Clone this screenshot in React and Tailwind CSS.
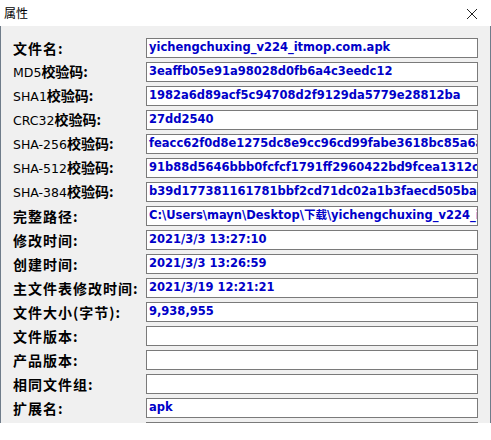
const rows = [
  ['文件名:', 'yichengchuxing_v224_itmop.com.apk'],
  ['MD5校验码:', '3eaffb05e91a98028d0fb6a4c3eedc12'],
  ['SHA1校验码:', '1982a6d89acf5c94708d2f9129da5779e28812ba'],
  ['CRC32校验码:', '27dd2540'],
  ['SHA-256校验码:', 'feacc62f0d8e1275dc8e9cc96cd99fabe3618bc85a6a91c0e2d7'],
  ['SHA-512校验码:', '91b88d5646bbb0fcfcf1791ff2960422bd9fcea1312cd4a8e0b2'],
  ['SHA-384校验码:', 'b39d177381161781bbf2cd71dc02a1b3faecd505ba7c2e19'],
  ['完整路径:', 'C:\\Users\\mayn\\Desktop\\下载\\yichengchuxing_v224_itmop.com.apk'],
  ['修改时间:', '2021/3/3 13:27:10'],
  ['创建时间:', '2021/3/3 13:26:59'],
  ['主文件表修改时间:', '2021/3/19 12:21:21'],
  ['文件大小(字节):', '9,938,955'],
  ['文件版本:', ''],
  ['产品版本:', ''],
  ['相同文件组:', ''],
  ['扩展名:', 'apk'],
  ['', ''],
];

// CJK runs are drawn bold, latin runs plain
function Label({ text }) {
  const parts = text.match(/[\u4e00-\u9fff()（）:]+|[^\u4e00-\u9fff()（）:]+/g) || [];
  const mixed = /[A-Za-z0-9]/.test(text);
  return (
    <span className="whitespace-nowrap text-black">
      {parts.map((p, i) =>
        /[\u4e00-\u9fff]/.test(p) || /^[():]+$/.test(p) ? (
          <span
            key={i}
            className={`text-[14px] font-bold ${mixed ? 'tracking-[0px]' : 'tracking-[1px]'}`}
            style={{ fontFamily: '"Noto Sans CJK SC", sans-serif' }}
          >
            {p}
          </span>
        ) : (
          <span key={i} className="text-[12.5px]" style={{ fontFamily: '"DejaVu Sans", Verdana, sans-serif' }}>
            {p}
          </span>
        )
      )}
    </span>
  );
}

export default function App() {
  return (
    <div className="w-[491px] h-[440px] bg-white">
      <div className="flex h-[26px] items-center justify-between bg-white pl-[4px] pr-[13px]">
        <span className="text-[12px] text-black" style={{ fontFamily: '"Noto Sans CJK SC", sans-serif' }}>属性</span>
        <svg width="12" height="12" viewBox="0 0 12 12" className="mt-[1px]">
          <path d="M1 1 L11 11 M11 1 L1 11" stroke="#222" strokeWidth="1" fill="none" />
        </svg>
      </div>
      <div className="h-[397px] overflow-hidden border-x border-[#6f7c8a] bg-[#f0f0f0] pl-[12px] pr-[12px] pt-[12px]">
        <div className="flex flex-col gap-[4px]">
          {rows.map(([label, value], i) => (
            <div key={i} className="flex h-[20px] items-center">
              <div className="w-[133px] shrink-0 leading-[20px]">
                <Label text={label} />
              </div>
              <div className="flex h-[20px] flex-1 items-center overflow-hidden border border-[#7a7a7a] bg-white pl-[2px]">
                <span
                  className="whitespace-nowrap text-[11.5px] font-bold text-[#0000c8]"
                  style={{ fontFamily: '"DejaVu Sans", "Noto Sans CJK SC", sans-serif' }}
                >
                  {value}
                </span>
              </div>
            </div>
          ))}
        </div>
      </div>
    </div>
  );
}
